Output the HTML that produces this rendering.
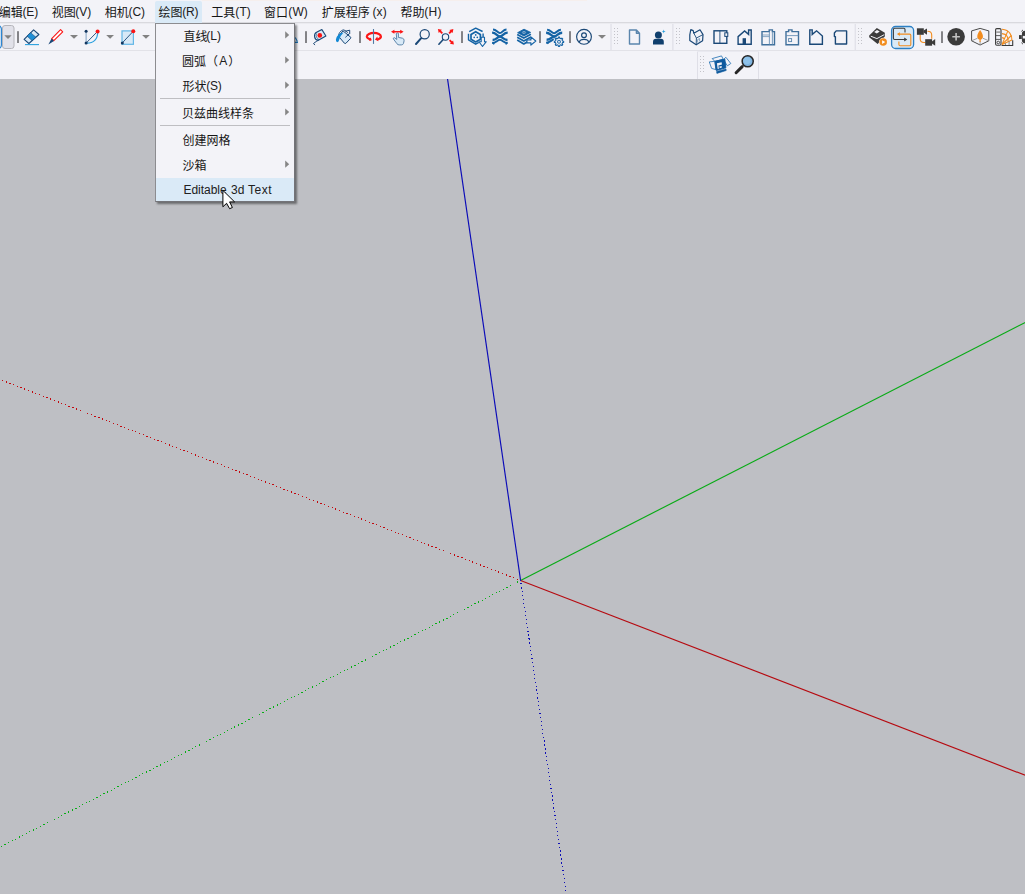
<!DOCTYPE html>
<html lang="zh-CN">
<head>
<meta charset="utf-8">
<title>SketchUp</title>
<style>
html,body{margin:0;padding:0}
body{width:1025px;height:894px;overflow:hidden;position:relative;background:#bebfc4;font-family:"Liberation Sans","Noto Sans CJK SC",sans-serif;color:#161616}
.abs{position:absolute}
#ui{position:absolute;left:0;top:0;width:1025px;height:79px;background:#f3f3f8}
.ln{position:absolute;height:1px;left:0;width:1025px}
.lt{position:absolute;white-space:pre;line-height:1;color:#202020}
.hl{position:absolute;background:#daeaf7}
.cj{position:absolute;height:14px;line-height:14px;font-size:12px;overflow:visible;white-space:nowrap;color:#161616;font-family:"Liberation Sans","Noto Sans CJK SC",sans-serif}
#popup{position:absolute;left:155px;top:23px;width:138px;height:177px;border:1px solid #8c8c90;border-right-color:#737378;border-bottom-color:#737378;background:#f3f3f8;box-shadow:2px 2px 2px rgba(0,0,0,.44)}
.sep{position:absolute;left:4px;width:130px;height:1px;background:#bebec2}
svg{position:absolute;left:0;top:0;overflow:visible}
</style>
</head>
<body>
<div id="ui"></div>
<div class="ln" style="top:22px;background:#d9d9de"></div>
<div class="ln" style="top:23px;background:#ebebf0"></div>
<div class="ln" style="top:50px;background:#e2e2e8"></div>
<div class="ln" style="top:0;left:202px;width:385px;background:#f6efed"></div>
<div class="hl" style="left:155px;top:1px;width:47px;height:22px;border-radius:2px 2px 0 0"></div>

<!-- viewport axes -->
<svg width="1025" height="894" viewBox="0 0 1025 894" style="top:0">
 <defs><clipPath id="vp"><rect x="0" y="79" width="1025" height="815"/></clipPath></defs>
 <g clip-path="url(#vp)" fill="none" stroke-width="1.15">
  <line x1="520.6" y1="580.5" x2="447.4" y2="78" stroke="#0a0ab8"/>
  <line x1="520.6" y1="580.5" x2="1026" y2="322.1" stroke="#09ab16"/>
  <line x1="520.6" y1="580.5" x2="1026" y2="775.6" stroke="#b60a10"/>
  <g stroke-width="1.1" stroke-dasharray="1.2 2.77" stroke-dashoffset="-2.9" shape-rendering="crispEdges">
   <line x1="520.6" y1="580.5" x2="-1" y2="379.1" stroke="#c20a10"/>
   <line x1="520.6" y1="580.5" x2="-1" y2="847.6" stroke="#0aae18"/>
   <line x1="520.55" y1="580.5" x2="566.6" y2="895" stroke="#1010b6"/>
  </g>
 </g>
</svg>

<!-- toolbars -->
<svg width="1025" height="80" viewBox="0 0 1025 80">
<defs><clipPath id="tb"><rect x="0" y="23" width="1025" height="56"/></clipPath></defs>
<g clip-path="url(#tb)">
<rect x="-20" y="25.5" width="21.4" height="23" rx="3.5" fill="#e6f0fa" stroke="#217fd0" stroke-width="1.1"/>
<rect x="2.5" y="25.5" width="11.5" height="23" rx="2.5" fill="#e1e1e9" stroke="#b4b4ba" stroke-width="1"/>
<path d="M4.3,35.3 H11.7 L8.0,38.9Z" fill="#828282"/>
<rect x="17" y="31.2" width="2" height="11.8" fill="#838387"/>
<g stroke-linejoin="round">
 <path d="M33.6,29.8 L38.9,34.5 L28.9,43.5 L24.1,39.4Z" fill="#d8e9f7" stroke="#1a4877" stroke-width="1.1"/>
 <path d="M30.6,32.7 L35.9,37.2 L32.1,40.6 L27.0,36.1Z" fill="#1e8fd6" stroke="#1a4877" stroke-width="0.6"/>
 <path d="M25,44.6 H39" stroke="#2aa0de" stroke-width="1.1" fill="none"/>
</g>
<g stroke-linejoin="round">
 <path d="M60.6,29.7 L62.7,31.8 L53.8,40.7 L51.7,38.6Z" fill="#fff" stroke="#fb1414" stroke-width="1.1"/>
 <path d="M51.5,38.4 L54.0,40.9 L48.4,44.4Z" fill="#1a4877"/>
</g>
<path d="M70,34.9 H78 L74.0,38.8Z" fill="#828282"/>
<g fill="none">
 <path d="M86.1,31.2 V43.1" stroke="#7f9fc2" stroke-width="1"/>
 <path d="M86.1,43.1 L97.4,31.6" stroke="#1a4877" stroke-width="0.9"/>
 <path d="M86.1,43.1 Q97.6,43.4 97.8,31.4" stroke="#2aa0de" stroke-width="1.2"/>
 <circle cx="86.1" cy="31.2" r="1.5" fill="#12365f"/>
 <circle cx="86.1" cy="43.1" r="1.5" fill="#12365f"/>
 <circle cx="97.6" cy="31.4" r="2" fill="#fb1414"/>
</g>
<path d="M106.2,34.9 H114 L110.1,38.8Z" fill="#828282"/>
<g>
 <rect x="122" y="30.9" width="11.4" height="13.4" fill="#d8e9f7" stroke="#62b6e6" stroke-width="1.2"/>
 <path d="M122.3,42.9 L133.2,31.3" stroke="#1a4877" stroke-width="0.9"/>
 <circle cx="122.3" cy="42.9" r="1.5" fill="#12365f"/>
 <circle cx="133.3" cy="31.2" r="2" fill="#fb1414"/>
</g>
<path d="M142.1,34.9 H149.9 L146.0,38.8Z" fill="#828282"/>
<path d="M295,42.4 H298 M295.3,37.6 L297.4,41.6" stroke="#1f7cc2" stroke-width="1.1" fill="none"/>
<rect x="305" y="31.2" width="2" height="11.8" fill="#838387"/>
<g stroke-linejoin="round" stroke-linecap="round">
 <path d="M321.9,29.6 L325.9,36 L318.8,40 Q315.4,40.6 314.6,36.8 Q314.1,33.6 316.6,32.3Z" fill="#d8e9f7" stroke="#1a4877" stroke-width="1.1"/>
 <path d="M316.4,34 Q315.4,37.6 318.4,39.2" fill="none" stroke="#1a4877" stroke-width="0.6"/>
 <circle cx="319.8" cy="35.4" r="2.3" fill="#fb1414"/>
 <path d="M318.8,40 Q316,41.4 313.5,43.5 L314.7,44.8" fill="none" stroke="#1a4877" stroke-width="1"/>
</g>
<g stroke-linejoin="round" stroke-linecap="round">
 <path d="M343.4,31.2 L350.8,37.3 Q351,38 350.4,38.6 L345.9,43.3 Q345.1,43.8 344.4,43.2 L338.6,36.4Z" fill="#d8e9f7" stroke="#1a4877" stroke-width="1"/>
 <path d="M338.4,36.2 Q338.6,31.6 343.2,29.8 Q345.2,29.8 347.6,32.6" fill="none" stroke="#1a4877" stroke-width="0.9"/>
 <path d="M345.6,31.2 L349.7,30.2 V33.6" fill="none" stroke="#1a4877" stroke-width="1"/>
 <path d="M348.3,34.7 L345.6,37.2" fill="none" stroke="#1a4877" stroke-width="0.9"/>
 <circle cx="348.3" cy="34.7" r="0.9" fill="#1a4877"/>
 <path d="M343.6,32.6 Q337.4,33.2 335.9,39.6 Q335.7,42 337.2,42.2 Q338.9,42 339.1,40 Q339.8,36.2 343.6,32.6Z" fill="#1288d4"/>
</g>
<rect x="359" y="31.2" width="2" height="11.8" fill="#838387"/>
<g fill="none">
 <path d="M366.9,36.4 A7,3.5 0 0 1 380.9,36.4" stroke="#fb1414" stroke-width="2.2"/>
 <path d="M366.9,36.2 A7,3.5 0 0 0 371,39.6" stroke="#fb1414" stroke-width="2.2"/>
 <path d="M380.9,36.2 A7,3.5 0 0 1 377.4,39.5" stroke="#fb1414" stroke-width="2.2"/>
 <path d="M377.3,36.6 L378.4,41.2 L374.9,39.6Z" fill="#fb1414"/>
 <path d="M370.4,37.4 L371.9,40.2 L368.9,40.8Z" fill="#fb1414"/>
 <path d="M373.5,29 V43.9" stroke="#4f7aa3" stroke-width="1.1"/>
</g>
<g stroke-linejoin="round" stroke-linecap="round">
 <path d="M396.5,33.4 Q397.4,32.4 398.4,33.4 V37.4 L402.4,38.2 Q404.4,38.8 404.1,40.8 L403.5,43.4 Q403,44.9 401.4,44.9 H399.2 Q397.8,44.9 397,43.8 L393.3,38.8 Q393.2,37.6 394.6,37.7 L396.5,39.2Z" fill="#d8e9f7" stroke="#4f7aa3" stroke-width="0.9"/>
 <path d="M391,31.7 L394.4,29.7 V30.9 H400.2 V29.7 L403.6,31.7 L400.2,33.7 V32.5 H394.4 V33.7Z" fill="#fb1414"/>
</g>
<g fill="none" stroke="#1a4877" stroke-linecap="round">
 <circle cx="424.7" cy="34.2" r="4.6" stroke-width="1.2"/>
 <path d="M421.2,38.2 L416,44" stroke-width="2"/>
</g>
<g fill="none" stroke-linecap="round">
 <circle cx="445.5" cy="37" r="3.2" stroke="#1a4877" stroke-width="1.1"/>
 <path d="M443,39.8 L438.9,44.2" stroke="#1a4877" stroke-width="1.6"/>
 <g fill="#fb1414" stroke="#fb1414" stroke-width="1.9" stroke-linecap="butt">
  <path d="M442.3,33.3 L439.9,30.9"/><path d="M437.9,28.9 L441.9,29.7 L438.7,32.9Z" stroke="none"/>
  <path d="M449.1,33.4 L451.5,31"/><path d="M453.4,29.1 L452.6,33.1 L449.4,29.9Z" stroke="none"/>
  <path d="M449.6,40.2 L452,42.6"/><path d="M453.9,44.5 L449.9,43.7 L453.1,40.5Z" stroke="none"/>
 </g>
</g>
<rect x="461" y="31.2" width="2" height="11.8" fill="#838387"/>
<g fill="none" stroke="#1463a5" stroke-linejoin="round">
 <path d="M469.2,31.7 L475.7,28.2 L482.6,31.5" stroke-width="1.4"/>
 <path d="M468.5,33.8 V39.8 L475.7,44.2 L478.8,42.4" stroke-width="1.4"/>
 <path d="M483.1,33.6 V37" stroke-width="1.4"/>
 <path d="M475.7,31.7 L480.4,34.4 V39.2 L475.7,41.9 L471,39.2 V34.4Z" stroke-width="1.7"/>
 <circle cx="475.7" cy="34.9" r="0.85" fill="#1463a5" stroke="none"/><circle cx="474.2" cy="37.3" r="0.85" fill="#1463a5" stroke="none"/><circle cx="477.3" cy="37.3" r="0.85" fill="#1463a5" stroke="none"/>
 <path d="M481.2,37.2 H484.5 V41.7 H486.3 L482.5,46.5 L479,41.7 H481.2Z" fill="#f3f3f8" stroke-width="1.1"/>
</g>
<g fill="none" stroke="#1463a5" stroke-linecap="butt"><path d="M493.0,29.50 C496.52,29.50 497.62,33.10 499.9,33.10 C502.18,33.10 502.96,29.50 506.5,29.50" stroke-width="2.0"/><path d="M492.1,32.65 C496.16,32.65 497.25,36.40 499.9,36.40 C502.55,36.40 503.64,32.65 507.7,32.65" stroke-width="2.3"/><path d="M492.6,40.00 C496.46,40.00 497.35,36.70 499.9,36.70 C502.45,36.70 503.65,40.00 507.5,40.00" stroke-width="2.3"/><path d="M492.1,43.08 C496.16,43.08 497.25,39.85 499.9,39.85 C502.55,39.85 503.64,43.08 507.7,43.08" stroke-width="2.0"/></g>
<path d="M493.2,42.6 L494,44.4 M506.6,42.6 L506,44.4" stroke="#1463a5" stroke-width="1.6" fill="none"/>
<g stroke-linejoin="round">
 <path d="M517.2,40 L523.8,43.9 L530.9,39.8" fill="none" stroke="#1463a5" stroke-width="1.7"/>
 <path d="M517.2,37.3 L523.8,40.9 L530.9,37" fill="none" stroke="#1463a5" stroke-width="1.7"/>
 <path d="M517.2,34.6 L523.8,38.1 L530.9,34.2" fill="none" stroke="#1463a5" stroke-width="1.7"/>
 <path d="M517.6,32.7 L524,29.2 L530.6,32.4 L523.8,35.9Z" fill="#1463a5" stroke="#1463a5" stroke-width="0.9"/>
 <path d="M521.4,32.5 L524,31.1 L526.6,32.4 L523.9,33.9Z" fill="#f3f3f8"/>
 <path d="M524,30.6 V34.4 M520.6,32.6 H527.4" stroke="#1463a5" stroke-width="0.7"/>
 <path d="M526.9,40 H530.9 V36.9 L535.8,41 L530.9,45.1 V42.9 H526.9Z" fill="#f3f3f8" stroke="#1463a5" stroke-width="1.2"/>
</g>
<rect x="539" y="31.2" width="2" height="11.8" fill="#838387"/>
<g fill="none" stroke="#1463a5" stroke-linecap="butt"><path d="M547.1,29.76 C550.67,29.76 551.80,33.19 554.2,33.19 C556.50,33.19 557.31,29.76 560.9,29.76" stroke-width="2.0"/><path d="M546.1,32.76 C550.29,32.76 551.41,36.34 554.2,36.34 C556.89,36.34 558.01,32.76 562.2,32.76" stroke-width="2.3"/><path d="M546.6,39.77 C550.60,39.77 551.52,36.62 554.2,36.62 C556.78,36.62 558.02,39.77 562.0,39.77" stroke-width="2.3"/><path d="M546.1,42.70 C550.29,42.70 551.41,39.62 554.2,39.62 C556.89,39.62 558.01,42.70 562.2,42.70" stroke-width="2.0"/></g>
<path d="M547.4,42.4 L548.2,43.8" stroke="#1463a5" stroke-width="1.6" fill="none"/>
<g>
 <circle cx="559" cy="41.8" r="5.6" fill="#f3f3f8"/>
 <path d="M562.51,41.01 L563.66,41.19 L563.66,42.41 L562.51,42.59 L562.04,43.73 L562.73,44.66 L561.86,45.53 L560.93,44.84 L559.79,45.31 L559.61,46.46 L558.39,46.46 L558.21,45.31 L557.07,44.84 L556.14,45.53 L555.27,44.66 L555.96,43.73 L555.49,42.59 L554.34,42.41 L554.34,41.19 L555.49,41.01 L555.96,39.87 L555.27,38.94 L556.14,38.07 L557.07,38.76 L558.21,38.29 L558.39,37.14 L559.61,37.14 L559.79,38.29 L560.93,38.76 L561.86,38.07 L562.73,38.94 L562.04,39.87Z" fill="#f3f3f8" stroke="#1463a5" stroke-width="1.1" stroke-linejoin="round"/>
 <rect x="557.7" y="40.5" width="2.6" height="2.6" rx="0.5" fill="#f3f3f8" stroke="#1463a5" stroke-width="1"/>
</g>
<rect x="569" y="31.2" width="2" height="11.8" fill="#838387"/>
<g fill="none" stroke="#1a4877" stroke-width="1.15">
 <circle cx="584" cy="36.8" r="7.4"/>
 <circle cx="584" cy="35.2" r="2.4"/>
 <path d="M579.3,42.4 Q579.6,39.4 584,39.4 Q588.4,39.4 588.7,42.4"/>
</g>
<path d="M598,34.9 H606 L602.0,38.8Z" fill="#828282"/>
<rect x="610.4" y="24" width="1.3" height="26" fill="#e0e0e8"/>
<g fill="#c3c3c9"><rect x="614" y="28" width="1" height="1"/><rect x="614" y="31" width="1" height="1"/><rect x="614" y="34" width="1" height="1"/><rect x="614" y="37" width="1" height="1"/><rect x="614" y="40" width="1" height="1"/><rect x="614" y="43" width="1" height="1"/><rect x="617" y="28" width="1" height="1"/><rect x="617" y="31" width="1" height="1"/><rect x="617" y="34" width="1" height="1"/><rect x="617" y="37" width="1" height="1"/><rect x="617" y="40" width="1" height="1"/><rect x="617" y="43" width="1" height="1"/></g>
<path d="M629.5,30 H636.4 L639.5,33.2 V44 H629.5Z M636.4,30 V33.2 H639.5" fill="none" stroke="#5b86ad" stroke-width="1.4" stroke-linejoin="round"/>
<g fill="#103f6d">
 <circle cx="658.4" cy="34.9" r="3.5"/>
 <path d="M653,44.4 V41.8 Q653,38.8 656,38.8 H660.8 Q663.8,38.8 663.8,41.8 V44.4Z"/>
 <path d="M663.7,29.4 L664.2,30.9 L665.7,31.4 L664.2,31.9 L663.7,33.4 L663.2,31.9 L661.7,31.4 L663.2,30.9Z" fill="#2aa0de"/>
</g>
<rect x="672.2" y="24" width="1.3" height="26" fill="#e0e0e8"/>
<g fill="#c3c3c9"><rect x="676" y="28" width="1" height="1"/><rect x="676" y="31" width="1" height="1"/><rect x="676" y="34" width="1" height="1"/><rect x="676" y="37" width="1" height="1"/><rect x="676" y="40" width="1" height="1"/><rect x="676" y="43" width="1" height="1"/><rect x="679" y="28" width="1" height="1"/><rect x="679" y="31" width="1" height="1"/><rect x="679" y="34" width="1" height="1"/><rect x="679" y="37" width="1" height="1"/><rect x="679" y="40" width="1" height="1"/><rect x="679" y="43" width="1" height="1"/></g>
<g fill="none" stroke="#1a4877" stroke-width="1.2" stroke-linejoin="round">
 <path d="M689.8,34.9 L690.8,29.6 L693.2,30.6 L693.8,33.2 L700,29.8 L703,34.6 L702.6,40.8 L696.2,44.8 L689.8,40.4Z" fill="#f3f3f8"/>
 <path d="M693.8,33.2 L696.4,38 L696.2,44.8 M696.4,38 L703,34.6" stroke-width="0.9"/>
 <path d="M697.6,42.6 V39.6 L699.6,38.6 V41.4" stroke="#5b86ad" stroke-width="0.7"/>
</g>
<g fill="none" stroke="#1a4877" stroke-width="1.4">
 <rect x="714" y="30.8" width="12.8" height="12.5"/>
 <path d="M719.9,30.8 V43.3" stroke-width="0.9"/>
 <rect x="724.8" y="32.8" width="3" height="3.6" fill="#f3f3f8" stroke-width="1"/>
</g>
<g stroke="#1a4877" stroke-width="1.4" stroke-linejoin="miter">
 <path d="M738.1,44.2 V36.6 L744.6,31 L748.6,34.4 V30 H751.2 V44.2Z" fill="#f3f3f8"/>
 <rect x="742.6" y="38.2" width="3.4" height="6" fill="#1a4877" stroke="none"/>
</g>
<g fill="none" stroke="#5b86ad" stroke-width="1.2">
 <path d="M762,44.8 V31.6 H769.2 V29.9 H772.4 V31.6 H774.5 V44.8Z" stroke="#40709c" stroke-width="1.4" fill="#f3f3f8"/>
 <path d="M762,35 H769.2 M762,36.6 H769.2" stroke-width="0.7"/>
 <path d="M769.4,31.6 V44.8 M772.4,31.6 V44.8" stroke-width="0.8"/>
</g>
<g fill="none" stroke="#40709c" stroke-width="1.4">
 <path d="M786,44.8 V31.6 H788.6 V29.9 H792 V31.6 H798.5 V44.8Z" fill="#f3f3f8"/>
 <path d="M786,35.6 H798.5" stroke-width="0.8" stroke="#5b86ad"/>
 <rect x="788.6" y="38.6" width="3" height="3" stroke-width="0.9" stroke="#5b86ad"/>
</g>
<path d="M809.8,44.2 V29.9 H812.2 V34.4 L816.6,30.8 L822.4,36 V44.2Z" fill="#f3f3f8" stroke="#1a4877" stroke-width="1.4"/>
<path d="M836.2,30.9 H846.6 V44 H835.4 V36.6 H834.4 V33 Z" fill="#f3f3f8" stroke="#1a4877" stroke-width="1.4" stroke-linejoin="round"/>
<rect x="854.6" y="24" width="1.3" height="26" fill="#e0e0e8"/>
<g fill="#c3c3c9"><rect x="858" y="28" width="1" height="1"/><rect x="858" y="31" width="1" height="1"/><rect x="858" y="34" width="1" height="1"/><rect x="858" y="37" width="1" height="1"/><rect x="858" y="40" width="1" height="1"/><rect x="858" y="43" width="1" height="1"/><rect x="861" y="28" width="1" height="1"/><rect x="861" y="31" width="1" height="1"/><rect x="861" y="34" width="1" height="1"/><rect x="861" y="37" width="1" height="1"/><rect x="861" y="40" width="1" height="1"/><rect x="861" y="43" width="1" height="1"/></g>
<g>
 <path d="M869.2,35.6 L876.8,28.1 L884.8,32.8 V36.6 L877.6,44.1 L869.2,37.2Z" fill="#3b3b3b"/>
 <path d="M874.2,32 L877,30.1 L879.7,31.4 L876.8,33.5Z" fill="#f3f3f8"/>
 <path d="M870.8,36.2 L876.9,38.6 L884.2,34.7" fill="none" stroke="#f3f3f8" stroke-width="1"/>
 <circle cx="883.2" cy="42.1" r="4.3" fill="#f3f3f8"/>
 <circle cx="883.2" cy="42.1" r="3.75" fill="#f28c1e"/>
 <path d="M882.1,40.2 L885.3,42.1 L882.1,44Z" fill="#fff"/>
</g>
<g fill="none">
 <rect x="891.6" y="26.5" width="22" height="22" rx="4" fill="#d9e9f6" stroke="#2b7fc4" stroke-width="1.3"/>
 <path d="M906.2,39.5 H894.6 Q893.4,39.5 893.4,38.3 V29.5 Q893.4,28.3 894.6,28.3 H903.8 Q905,28.3 905,29.5 V32.4" stroke="#3b3b3b" stroke-width="1.1"/>
 <path d="M907.3,39.5 L904.2,37.6 V41.4Z" fill="#3b3b3b"/>
 <path d="M898,34.1 H909.6 Q910.8,34.1 910.8,35.3 V44.5 Q910.8,45.7 909.6,45.7 H900.1 Q898.9,45.7 898.9,44.5 V41.4" stroke="#f28c1e" stroke-width="1.1"/>
 <path d="M896.9,34.1 L899.9,32.2 V36Z" fill="#f28c1e"/>
</g>
<g>
 <path d="M927.4,31.2 Q931.7,31.2 931.7,35 V38.8" fill="none" stroke="#f28c1e" stroke-width="1.1"/>
 <path d="M920.2,34.8 V39 Q920.2,42.5 924,42.5 H925.4" fill="none" stroke="#f28c1e" stroke-width="1.1"/>
 <rect x="916.9" y="28.3" width="6.9" height="6.5" fill="#3b3b3b"/>
 <path d="M923.6,30.6 L927,28.4 V34.7 L923.6,32.6Z" fill="#3b3b3b"/>
 <rect x="925.2" y="39.2" width="6.9" height="6.5" fill="#3b3b3b"/>
 <path d="M931.9,41.5 L935.2,39.1 V45.7 L931.9,43.5Z" fill="#3b3b3b"/>
</g>
<rect x="941" y="31.3" width="2" height="11.7" fill="#838387"/>
<g>
 <circle cx="956.1" cy="36.8" r="8.8" fill="#3b3b3b"/>
 <path d="M952.3,36.8 H959.9 M956.1,33 V40.6" stroke="#c4c4c4" stroke-width="1.6" fill="none"/>
</g>
<g fill="none" stroke="#4a4a4a" stroke-width="1" stroke-linejoin="round">
 <path d="M980.1,28.4 L988.8,30.9 V40.8 L980.1,45 L971.6,40.8 V30.9Z"/>
 <path d="M971.6,40.8 L977.6,38.2 M988.8,40.8 L982.8,38.2 M980.1,45 V41.4" stroke-width="0.8" stroke="#8a8a8a"/>
 <path d="M980.1,30 Q983.6,34.6 982.8,37.4 Q982.1,39.8 980.1,39.8 Q978.1,39.8 977.4,37.4 Q976.6,34.6 980.1,30Z" fill="#f28c1e" stroke="none"/>
 <path d="M980.1,39 V42" stroke="#f28c1e" stroke-width="1.2"/>
</g>
<g>
 <rect x="995.6" y="28.6" width="5.4" height="16.6" rx="1.2" fill="#f3f3f8" stroke="#3b3b3b" stroke-width="1.1"/>
 <path d="M996.2,32.1 H1000.4" stroke="#8e8e8e" stroke-width="1.4"/>
 <path d="M996,35.6 H1000.6 M996,39.4 H1000.6" stroke="#4a4a4a" stroke-width="0.9"/>
 <circle cx="998.3" cy="42.5" r="1.3" fill="none" stroke="#3b3b3b" stroke-width="0.9"/>
 <g fill="none" stroke="#f28c1e" stroke-width="1.1" stroke-linejoin="round">
  <path d="M1002,29.2 Q1007.6,29.6 1010,33.4 Q1012.2,36.6 1011.9,39.9 L1002,44.4"/>
  <path d="M1002,33.6 Q1005.6,33.8 1007.1,36.2 Q1008.3,38.4 1008,41.4"/>
  <path d="M1002,44.4 L1007.9,30.9 M1002,44.4 L1011.4,35.5 M1002,37.6 Q1003.8,37.8 1004.6,39.2"/>
 </g>
 <path d="M1005.4,45.4 V42.9 M1009.1,45.4 V41.2" stroke="#8a8a8a" stroke-width="1" fill="none"/>
 <path d="M1001.6,45.5 H1012.7 V40.2" fill="none" stroke="#3b3b3b" stroke-width="1.1"/>
</g>
<g>
 <rect x="1021.9" y="30.8" width="12" height="12.4" rx="3.2" fill="#3b3b3b"/>
 <rect x="1022.8" y="35.9" width="4" height="2.6" fill="#f3f3f8"/>
 <rect x="1019" y="35.1" width="2.8" height="3.9" fill="#3b3b3b"/>
 <path d="M1021.4,31.4 L1023,29.9 M1021.4,42.7 L1023,44.2" stroke="#3b3b3b" stroke-width="0.9" fill="none"/>
</g>
<rect x="697" y="51" width="1" height="28" fill="#dfdfe7"/><rect x="758" y="51" width="1" height="28" fill="#dfdfe7"/><rect x="697" y="51" width="62" height="1" fill="#e9e9f0"/>
<g fill="#c3c3c9"><rect x="700" y="56" width="1" height="1"/><rect x="700" y="59" width="1" height="1"/><rect x="700" y="62" width="1" height="1"/><rect x="700" y="65" width="1" height="1"/><rect x="700" y="68" width="1" height="1"/><rect x="700" y="71" width="1" height="1"/><rect x="703" y="56" width="1" height="1"/><rect x="703" y="59" width="1" height="1"/><rect x="703" y="62" width="1" height="1"/><rect x="703" y="65" width="1" height="1"/><rect x="703" y="68" width="1" height="1"/><rect x="703" y="71" width="1" height="1"/></g>
<g stroke="#1b6cb0" stroke-linejoin="round" fill="#f3f3f8">
 <path d="M712.2,58.6 L721.5,55.9 L723.2,59.2 L714.9,61.4Z" stroke-width="0.8"/>
 <path d="M709.3,61.9 L714.9,61.3 L715.8,69.6 L711.6,68.4Z" stroke-width="0.8"/>
 <path d="M725.9,57.3 L730.8,63.5 L727.4,65.8 L723.4,59.6Z" stroke-width="0.8"/>
 <path d="M714.9,61.3 L724.8,59.1 L725.9,67.8 L716.3,70.6Z" fill="#0f5a9e" stroke="#0f5a9e" stroke-width="0.9"/>
 <path d="M716.9,63.3 L721.6,62.2 L722.0,64.6 L718.4,65.5 L718.9,68.8 L717.7,69.1Z" fill="#f3f3f8" stroke="none"/><path d="M719.4,66.4 L721.6,65.9 L721.9,67.6 L719.7,68.2Z" fill="#f3f3f8" stroke="none"/><path d="M722.2,62.0 L724.4,61.5 L725,66.4 L723.4,65.4 L722.9,67.2 L722.2,64.8Z" fill="#0f5a9e" stroke="none"/>
 <path d="M716.5,71.6 L726,68.9 L726.2,70.5 L716.9,73.4Z" fill="#0f5a9e" stroke="#0f5a9e" stroke-width="0.6"/>
</g>
<g stroke-linecap="round">
 <circle cx="747.7" cy="61.3" r="5.55" fill="#7fb3de" stroke="#262626" stroke-width="1.5"/>
 <circle cx="746.9" cy="60.6" r="3.6" fill="#8ec2ea" stroke="none"/>
 <path d="M742.2,66.6 L736.1,72.7" stroke="#262626" stroke-width="3" fill="none"/>
</g>
</g></svg>

<!-- menu bar labels -->
<div id="menubar">
<div class="mi"><span class="cj" style="left:-1.3px;top:5.5px;width:24px">编辑</span><span class="lt" style="left:22.40px;top:5.84px;font-size:12px;letter-spacing:-0.065px;">(E)</span></div>
<div class="mi"><span class="cj" style="left:51.7px;top:5.5px;width:24px">视图</span><span class="lt" style="left:75.30px;top:5.84px;font-size:12px;letter-spacing:-0.032px;">(V)</span></div>
<div class="mi"><span class="cj" style="left:104.8px;top:5.5px;width:24px">相机</span><span class="lt" style="left:128.55px;top:5.84px;font-size:12px;letter-spacing:-0.086px;">(C)</span></div>
<div class="mi open"><span class="cj" style="left:158.6px;top:5.5px;width:24px">绘图</span><span class="lt" style="left:182.30px;top:5.84px;font-size:12px;letter-spacing:-0.286px;">(R)</span></div>
<div class="mi"><span class="cj" style="left:211.3px;top:5.5px;width:24px">工具</span><span class="lt" style="left:235.30px;top:5.84px;font-size:12px;letter-spacing:0.093px;">(T)</span></div>
<div class="mi"><span class="cj" style="left:264.0px;top:5.5px;width:24px">窗口</span><span class="lt" style="left:288.30px;top:5.84px;font-size:12px;letter-spacing:0.111px;">(W)</span></div>
<div class="mi"><span class="cj" style="left:321.7px;top:5.5px;width:48px">扩展程序</span><span class="lt" style="left:372.40px;top:5.84px;font-size:12px;letter-spacing:0.186px;">(x)</span></div>
<div class="mi"><span class="cj" style="left:400.4px;top:5.5px;width:24px">帮助</span><span class="lt" style="left:424.30px;top:5.84px;font-size:12px;letter-spacing:0.331px;">(H)</span></div>
</div>

<!-- popup menu -->
<div id="popup">
 <div class="sep" style="top:74px"></div>
 <div class="sep" style="top:101px"></div>
 <div class="hl" style="left:0;top:154px;width:138px;height:23px"></div>
</div>
<div id="popuptext">
<div class="it"><span class="cj" style="left:183.4px;top:30.1px;width:24px">直线</span><span class="lt" style="left:206.30px;top:30.24px;font-size:12px;letter-spacing:0.078px;">(L)</span></div>
<div class="it"><span class="cj" style="left:182.0px;top:54.9px;width:36px">圆弧（</span><span class="lt" style="left:219.30px;top:55.14px;font-size:12px;letter-spacing:-0.604px;">A</span><span class="cj" style="left:228.3px;top:54.9px;width:12px">）</span></div>
<div class="it"><span class="cj" style="left:182.5px;top:79.9px;width:24px">形状</span><span class="lt" style="left:206.20px;top:80.04px;font-size:12px;letter-spacing:-0.165px;">(S)</span></div>
<div class="it"><span class="cj" style="left:182.1px;top:106.8px;width:72px">贝兹曲线样条</span></div>
<div class="it"><span class="cj" style="left:182.5px;top:133.7px;width:48px">创建网格</span></div>
<div class="it"><span class="cj" style="left:182.4px;top:158.7px;width:24px">沙箱</span></div>
<div class="it sel"><span class="lt" style="left:183.40px;top:183.84px;font-size:12px;letter-spacing:-0.008px;">Editable </span><span class="lt" style="left:231.10px;top:183.84px;font-size:12px;letter-spacing:-0.024px;">3d </span><span class="lt" style="left:248.00px;top:183.84px;font-size:12px;letter-spacing:0.491px;">Text</span></div>
</div>

<!-- submenu arrows -->
<svg width="1025" height="210" viewBox="0 0 1025 210" fill="#868686">
 <path d="M285.2,31.3 L289.2,34.9 L285.2,38.5Z"/>
 <path d="M285.2,56.4 L289.2,60 L285.2,63.6Z"/>
 <path d="M285.2,81.5 L289.2,85.1 L285.2,88.7Z"/>
 <path d="M285.2,108.4 L289.2,112 L285.2,115.6Z"/>
 <path d="M285.2,160.6 L289.2,164.2 L285.2,167.8Z"/>
</svg>

<!-- mouse cursor -->
<svg width="1025" height="894" viewBox="0 0 1025 894">
 <path d="M222.9,190.4 L222.9,206.8 L226.6,203.3 L229.6,208.7 L232.4,207.5 L229.6,201.9 L234.6,201.9 Z" fill="#fff" stroke="#000" stroke-width="1" stroke-linejoin="miter"/>
</svg>
</body>
</html>
